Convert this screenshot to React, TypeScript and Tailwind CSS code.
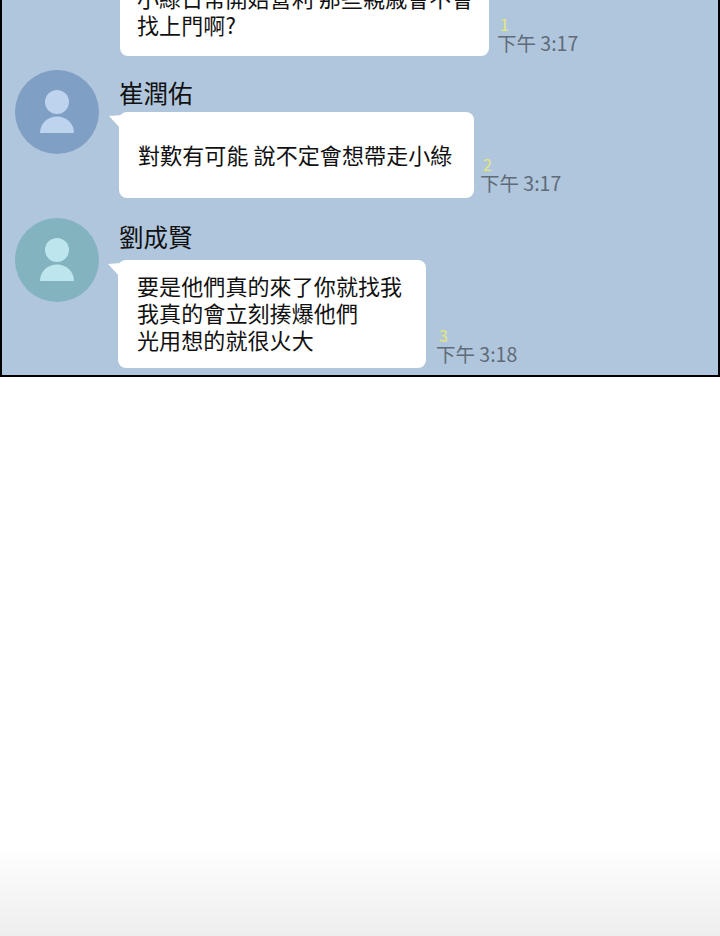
const cjk = "font-['Noto_Sans_CJK_TC','Noto_Sans',sans-serif]";

function Avatar({ bg, fg }: { bg: string; fg: string }) {
  return (
    <svg width="84" height="84" viewBox="0 0 84 84" className="shrink-0">
      <circle cx="42" cy="42" r="42" fill={bg} />
      <circle cx="42" cy="32" r="12" fill={fg} />
      <path d="M25 63 C25 53 33 46.500 42 46.500 C51 46.500 59 53 59 63 Z" fill={fg} />
    </svg>
  );
}

function Tail() {
  return (
    <svg width="13" height="15" viewBox="0 0 13 15" className="absolute left-[-10px] top-[3px]">
      <path d="M0 1 L13 0 L13 15 Z" fill="#ffffff" />
    </svg>
  );
}

function Time({ n, t }: { n: string; t: string }) {
  return (
    <div className="flex flex-col">
      <span className="ml-[3px] text-[16px] leading-[15px] text-[#e4e878]">{n}</span>
      <span className="mt-[-1px] text-[19.500px] leading-[24px] whitespace-nowrap text-[#5f6b78]">{t}</span>
    </div>
  );
}

export default function App() {
  return (
    <div className={`flex h-[936px] w-[720px] flex-col bg-white ${cjk}`}>
      <div className="flex h-[377px] flex-col justify-end overflow-hidden border-x-2 border-b-2 border-black bg-[#b0c6dc] pb-[7px]">
        {/* first message, top is cut off */}
        <div className="flex items-end pl-[118px]">
          <div className="w-[369px] rounded-lg bg-white px-[17px] pt-[14px] pb-[18px] text-[22px] leading-[27px] tracking-[0.1px] text-[#111]">
            <p className="whitespace-nowrap">小綠日常開始營利 那些親戚會不會</p>
            <p>找上門啊?</p>
          </div>
          <div className="mb-[1px] ml-[8px]">
            <Time n="1" t="下午 3:17" />
          </div>
        </div>

        <div className="mt-[14px] flex pl-[13px]">
          <Avatar bg="#7f9fc5" fg="#bdd3ee" />
          <div className="ml-[20px]">
            <div className="h-[42px] text-[24.500px] leading-[46px] text-[#111]">崔潤佑</div>
            <div className="flex items-end">
              <div className="relative flex h-[86px] w-[355px] items-center rounded-lg bg-white pb-[2px] pl-[19px] text-[22px] leading-[27px] tracking-[0.1px] whitespace-nowrap text-[#111]">
                <Tail />
                對歎有可能 說不定會想帶走小綠
              </div>
              <div className="mb-[3px] ml-[6px]">
                <Time n="2" t="下午 3:17" />
              </div>
            </div>
          </div>
        </div>

        <div className="mt-[20px] flex pl-[13px]">
          <Avatar bg="#82b3bf" fg="#bde5ee" />
          <div className="ml-[19px]">
            <div className="h-[42px] pl-[1px] text-[24.500px] leading-[38px] text-[#111]">劉成賢</div>
            <div className="flex items-end">
              <div className="relative w-[308px] rounded-lg bg-white px-[19px] pt-[12px] pb-[15px] text-[22px] leading-[27px] tracking-[0.1px] whitespace-nowrap text-[#111]">
                <Tail />
                <p>要是他們真的來了你就找我</p>
                <p>我真的會立刻揍爆他們</p>
                <p>光用想的就很火大</p>
              </div>
              <div className="mb-[2px] ml-[10px]">
                <Time n="3" t="下午 3:18" />
              </div>
            </div>
          </div>
        </div>
      </div>
      <div className="flex-1" />
      <div className="h-[90px] bg-gradient-to-b from-white to-[#eeeeee]" />
    </div>
  );
}
